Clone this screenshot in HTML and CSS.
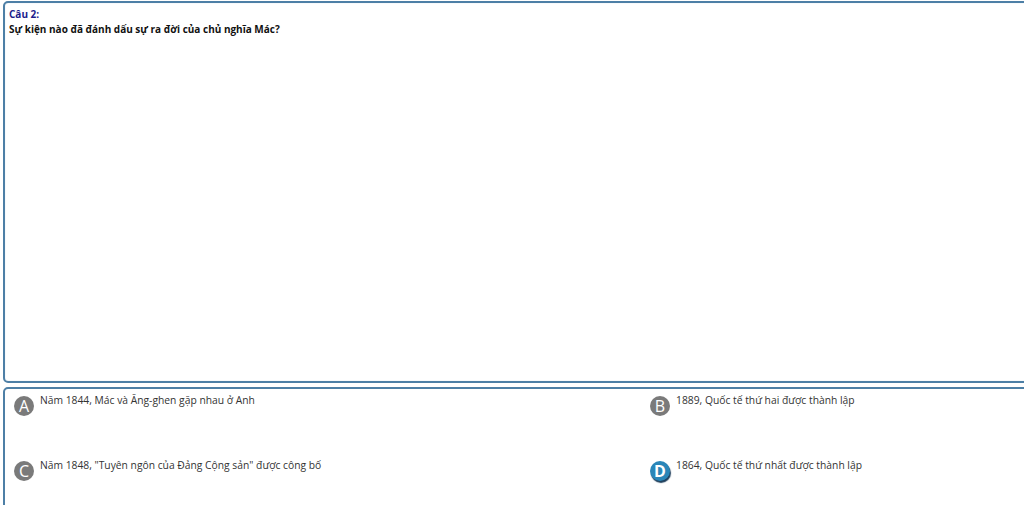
FILE: index.html
```html
<!DOCTYPE html>
<html lang="vi">
<head>
<meta charset="utf-8">
<title>Câu 2</title>
<link rel="stylesheet" href="styles.css">
</head>
<body>
<div class="page">
  <section class="question">
    <div class="q-num">Câu 2:</div>
    <div class="q-text">Sự kiện nào đã đánh dấu sự ra đời của chủ nghĩa Mác?</div>
  </section>
  <section class="answers">
    <div class="option"><span class="badge">A</span><span class="opt-text">Năm 1844, Mác và Ăng-ghen gặp nhau ở Anh</span></div>
    <div class="option"><span class="badge">B</span><span class="opt-text">1889, Quốc tế thứ hai được thành lập</span></div>
    <div class="option"><span class="badge">C</span><span class="opt-text">Năm 1848, "Tuyên ngôn của Đảng Cộng sản" được công bố</span></div>
    <div class="option"><span class="badge badge-correct">D</span><span class="opt-text">1864, Quốc tế thứ nhất được thành lập</span></div>
  </section>
</div>
</body>
</html>
```
FILE: styles.css
```css
*, *::before, *::after {
  box-sizing: border-box;
}
html, body {
  margin: 0;
  padding: 0;
  background: #ffffff;
  overflow: hidden;
}
body {
  font-family: "Open Sans", "Noto Sans", "Liberation Sans", sans-serif;
  color: #333333;
  height: 505px;
}
.page {
  padding: 1px 0 0 3px;
  width: 1300px;
  display: flex;
  flex-direction: column;
  gap: 4px;
}
.question {
  height: 382px;
  border: 2px solid #4d7fa6;
  border-radius: 5px;
  padding: 4px 4px;
  box-shadow: inset 0 0 1px #a8c6dc;
}
.q-num {
  color: #1c1c8c;
  font-weight: 700;
  font-size: 10px;
  line-height: 15px;
}
.q-text {
  color: #111111;
  font-weight: 700;
  font-size: 10px;
  line-height: 15px;
}
.answers {
  border: 2px solid #4d7fa6;
  border-radius: 5px;
  padding: 4px 9px 0 9px;
  height: 160px;
  display: grid;
  grid-template-columns: repeat(2, 636px);
  grid-auto-rows: 65px;
}
.option {
  display: flex;
  align-items: flex-start;
  gap: 6px;
}
.badge {
  flex: none;
  width: 20px;
  height: 20px;
  border-radius: 50%;
  background: #7a7a7a;
  color: #ffffff;
  font-size: 16px;
  line-height: 20px;
  text-align: center;
  margin-top: 3px;
  font-family: "Open Sans", "Noto Sans", sans-serif;
}
.badge-correct {
  background: #2a86b8;
  box-shadow: 1px 2px 1px #1f3f5c;
  font-weight: 700;
}
.opt-text {
  font-size: 10.3px;
  line-height: 15px;
  color: #333333;
}
```
